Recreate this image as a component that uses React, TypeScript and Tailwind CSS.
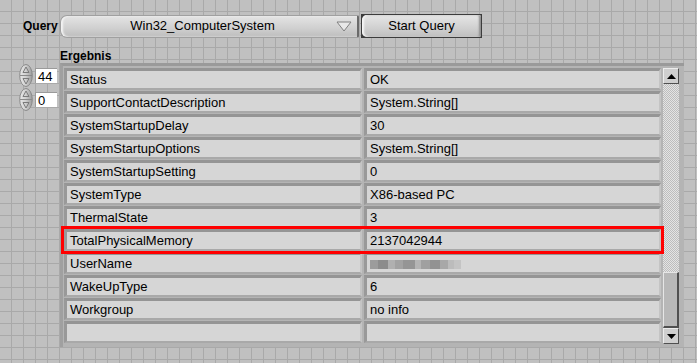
import React from "react";

const rows: [string, string | null][] = [
  ["Status", "OK"],
  ["SupportContactDescription", "System.String[]"],
  ["SystemStartupDelay", "30"],
  ["SystemStartupOptions", "System.String[]"],
  ["SystemStartupSetting", "0"],
  ["SystemType", "X86-based PC"],
  ["ThermalState", "3"],
  ["TotalPhysicalMemory", "2137042944"],
  ["UserName", null],
  ["WakeUpType", "6"],
  ["Workgroup", "no info"],
  ["", ""],
];

function Cell({ text, w }: { text: string | null; w: string }) {
  return (
    <div
      className={`${w} h-[22px] flex items-center pl-[3px] bg-[#d6d6d6] border-t-[3px] border-l-[3px] border-t-[#959595] border-l-[#999999] border-b-2 border-r-2 border-b-[#a9a9a9] border-r-[#c4c4c4] text-[13px] leading-none text-black whitespace-nowrap`}
    >
      {text === null ? (
        // blurred user name
        <div className="flex h-[9px] mt-[2px] blur-[0.6px]">
          <span className="w-[8px] bg-[#9c9c9c]" />
          <span className="w-[10px] bg-[#8c8c8c]" />
          <span className="w-[7px] bg-[#b0b0b0]" />
          <span className="w-[8px] bg-[#a2a2a2]" />
          <span className="w-[12px] bg-[#959595]" />
          <span className="w-[6px] bg-[#b4b4b4]" />
          <span className="w-[9px] bg-[#a0a0a0]" />
          <span className="w-[10px] bg-[#929292]" />
          <span className="w-[8px] bg-[#a8a8a8]" />
          <span className="w-[6px] bg-[#bcbcbc]" />
          <span className="w-[7px] bg-[#c4c4c4]" />
        </div>
      ) : (
        text
      )}
    </div>
  );
}

function Spinner({ value }: { value: string }) {
  return (
    <div className="flex items-center h-[23px]">
      <svg width="14" height="23" viewBox="0 0 14 23" className="shrink-0">
        <defs>
          <linearGradient id="sp" x1="0" x2="1">
            <stop offset="0" stopColor="#e8e8e8" />
            <stop offset="0.45" stopColor="#d2d2d2" />
            <stop offset="1" stopColor="#9a9a9a" />
          </linearGradient>
        </defs>
        <ellipse cx="7" cy="11.5" rx="6.3" ry="11" fill="url(#sp)" stroke="#8a8a8a" />
        <line x1="1" y1="11.5" x2="13" y2="11.5" stroke="#8a8a8a" />
        <path d="M4 8.5 L7 3 L10 8.5 Z" fill="none" stroke="#7a7a7a" />
        <path d="M4 14.5 L7 20 L10 14.5 Z" fill="none" stroke="#7a7a7a" />
      </svg>
      <div className="ml-[2px] w-[22px] h-[15px] shrink-0 bg-white flex items-center pl-[2px] text-[13px] leading-none text-black border-t border-l border-[#9a9a9a]">
        {value}
      </div>
    </div>
  );
}

export default function App() {
  return (
    <div
      className="w-[697px] h-[363px] overflow-hidden bg-[#c0c0c0] bg-[linear-gradient(to_right,#a9a9a9_1px,transparent_1px),linear-gradient(to_bottom,#a9a9a9_1px,transparent_1px)] bg-[size:12px_12px] bg-[position:11px_11px] text-black"
      style={{ fontFamily: '"Liberation Sans", Arial, sans-serif' }}
    >
      {/* query row */}
      <div className="flex items-center pt-[14px]">
        <div className="w-[60px] pl-[23px] text-[12px] font-bold">Query</div>
        <div className="w-[299px] h-[23px] flex items-center rounded-l-[7px] rounded-r-[2px] bg-[linear-gradient(to_bottom,#e4e4e4,#cfcfcf_60%,#bdbdbd)] border border-[#a0a0a0] border-r-2 border-r-[#6a6a6a] shadow-[inset_2px_0_2px_#f4f4f4]">
          <div className="flex-1 text-center text-[13px] pl-[8px]">Win32_ComputerSystem</div>
          <svg width="16" height="11" viewBox="0 0 16 11" className="mr-[5px]">
            <path d="M1 1 L15 1 L8 10 Z" fill="#e8e8e8" stroke="#808080" />
          </svg>
        </div>
        <div className="ml-[2px] w-[121px] h-[24px] border border-[#3c3c3c] bg-[#3c3c3c]">
          <div className="h-full rounded-l-[5px] rounded-r-[2px] bg-[linear-gradient(to_bottom,#e6e6e6,#d0d0d0_60%,#bfbfbf)] flex items-center justify-center text-[13px] shadow-[inset_2px_0_2px_#f6f6f6,inset_-2px_0_2px_#8e8e8e]">
            Start Query
          </div>
        </div>
      </div>

      <div className="pl-[60px] pt-[12px] text-[12px] font-bold leading-[13px]">Ergebnis</div>

      {/* body */}
      <div className="flex">
        <div className="w-[60px] pl-[19px] pt-[1px] flex flex-col gap-[1px]">
          <Spinner value="44" />
          <Spinner value="0" />
        </div>

        <div className="w-[624px] h-[284px] bg-[#b4b4b4] border-t-[3px] border-l-[3px] border-t-[#9a9a9a] border-l-[#a0a0a0] flex pt-[2px] pl-[1px]">
          <div className="flex flex-col">
            {rows.map(([k, v], i) => (
              <div
                key={i}
                className={`flex gap-[2px] mb-[1px] ${
                  k === "TotalPhysicalMemory" ? "outline-[3px] outline-solid outline-[#ff0000] outline-offset-[0px] relative z-10" : ""
                }`}
              >
                <Cell text={k} w="w-[298px]" />
                <Cell text={v} w="w-[297px]" />
              </div>
            ))}
          </div>

          {/* scrollbar */}
          <div className="ml-[2px] w-[16px] h-[276px] flex flex-col bg-[#c8c8c8] bg-[repeating-conic-gradient(#bdbdbd_0_25%,#e4e4e4_0_50%)] bg-[size:2px_2px]">
            <div className="h-[16px] bg-[#cfcfcf] border border-[#ececec] border-r-[#505050] border-b-[#505050] flex items-center justify-center">
              <svg width="9" height="5" viewBox="0 0 9 5">
                <path d="M0 5 L4.5 0 L9 5 Z" fill="#000" />
              </svg>
            </div>
            <div className="flex-1" />
            <div className="h-[56px] bg-[#b8b8b8] border border-[#e6e6e6] border-r-2 border-b-2 border-r-[#505050] border-b-[#505050]" />
            <div className="h-[16px] bg-[#cfcfcf] border border-[#ececec] border-r-[#505050] border-b-[#505050] flex items-center justify-center">
              <svg width="9" height="5" viewBox="0 0 9 5">
                <path d="M0 0 L4.5 5 L9 0 Z" fill="#000" />
              </svg>
            </div>
          </div>
        </div>
      </div>
    </div>
  );
}
